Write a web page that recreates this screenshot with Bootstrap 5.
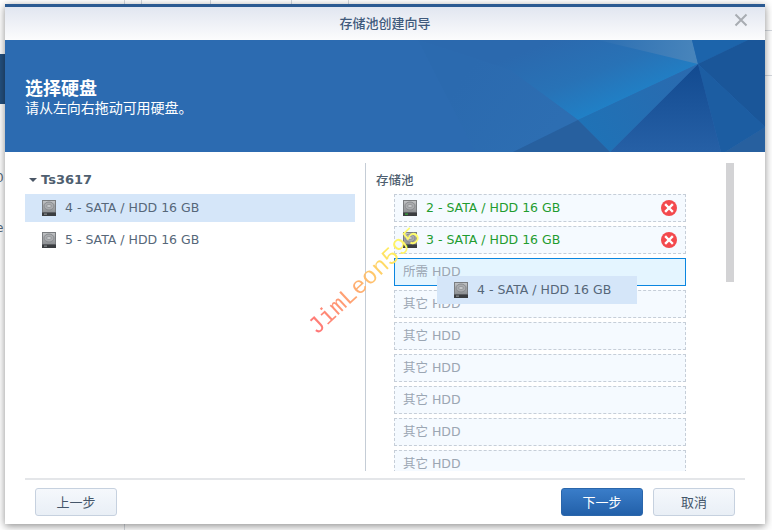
<!DOCTYPE html>
<html lang="zh">
<head>
<meta charset="utf-8">
<title>存储池创建向导</title>
<link href="https://cdn.jsdelivr.net/npm/bootstrap@5.3.0/dist/css/bootstrap.min.css" rel="stylesheet">
<style>
html,body{height:530px;overflow:hidden;background:#fff}
body{font-family:"DejaVu Sans","Noto Sans CJK SC",sans-serif;font-size:12.5px;color:#566779}
.desk{position:relative;width:772px;height:530px;overflow:hidden}
.vline{position:absolute;width:1px;background:#d4d8de}
.vl-t{top:0;height:5px}
.vl-b{top:524px;height:6px;left:124px}
.hline{position:absolute;left:765px;right:0;height:1px;background:#d4d8de}
.side-block{position:absolute;left:0;top:54px;width:5px;height:50px;background:#24507f}
.side-txt{position:absolute;left:-4px;font-size:12px;line-height:14px;color:#566779}
.wiz{position:absolute;left:5px;top:4px;width:760px;height:520px;background:#fff;border-top:3px solid #2b5a92;box-shadow:0 2px 8px rgba(0,0,0,.45)}
.wiz-title{height:33px;flex:none;background:linear-gradient(#e1e6f0,#fcfcfd);font:13px/32px "Noto Sans CJK SC",sans-serif;font-weight:500;color:#3f5a7c;text-align:center}
.wiz-x{position:absolute;right:17px;top:6px;width:14px;height:14px}
.hero{position:relative;height:112px;flex:none;background:#2c6bb1;color:#fff;padding:36px 0 0 20px;overflow:hidden;font-family:"Noto Sans CJK SC",sans-serif}
.hero svg{position:absolute;left:0;top:0}
.hero-h{position:relative;font-size:18px;line-height:22px;font-weight:700}
.hero-s{position:relative;font-size:14px;line-height:18px;letter-spacing:-.05px}
.wiz-main{height:308px;flex:none;margin-top:11px;padding-left:20px}
.left-pane{width:341px;height:308px;flex:none;border-right:1px solid #c5cdd6;padding-right:10px}
.tree-head{height:31px;font-weight:700;font-size:13px;line-height:33px;color:#4f5f70;padding-left:4px}
.tree-arrow{display:inline-block;width:0;height:0;border-left:4px solid transparent;border-right:4px solid transparent;border-top:4px solid #4a5666;margin-right:4px;vertical-align:2px}
.disk-row{height:28px;margin-bottom:4px;padding-left:17px;gap:9px;line-height:28px;white-space:nowrap}
.disk-sel{background:#d5e6f9}
.right-pane{width:368px;height:308px;flex:none;overflow:hidden}
.pool-label{height:31px;padding-left:10px;font:500 12.5px/33px "Noto Sans CJK SC",sans-serif;color:#4f5f70}
.slots{margin-left:28px;width:292px}
.slot{height:28px;margin-bottom:4px;border:1px dashed #c6ced8;background:#f5faff;padding-left:8px;gap:9px;line-height:26px;white-space:nowrap;color:#9ba6b3;font-family:"DejaVu Sans","Noto Sans CJK SC",sans-serif}
.slot-done{color:#1f9c2f}
.slot-focus{border:1px solid #0a86e0;background:#e4f5ff}
.rm{margin-left:auto;margin-right:8px}
.sbar{width:8px;height:119px;flex:none;background:#d3d3d5}
.wiz-foot{margin:7px 20px 0;flex:none;border-top:2px solid #e4e6e9;padding:8px 10px 0;gap:10px}
.wbtn{width:82px;height:28px;padding:0;border-radius:3px;font:13px/26px "Noto Sans CJK SC",sans-serif;color:#45566a;border:1px solid #c6d1df;background:linear-gradient(#f5f8fc,#e9eff6)}
.wbtn-main{color:#fff;border-color:#2a66ab;background:linear-gradient(#3a7dc9,#2260a9)}
.ghost{position:absolute;left:437px;top:276px;width:200px;height:28px;background:#d5e6f9;padding-left:17px;gap:9px;line-height:28px;white-space:nowrap}
.wmark{position:absolute;left:293px;top:268px;width:144px;font:24px/28px "Liberation Mono",monospace;transform:rotate(-43deg);background:linear-gradient(90deg,#ff7478,#ffb070 45%,#fff060 80%,#ffff70);-webkit-background-clip:text;background-clip:text;color:transparent;white-space:nowrap}
</style>
</head>
<body>
<svg width="0" height="0" class="position-absolute">
<defs>
<linearGradient id="hb" x1="0" y1="0" x2="0" y2="1"><stop offset="0" stop-color="#c4c6c8"/><stop offset="1" stop-color="#8b8e91"/></linearGradient>
<symbol id="hdd" viewBox="0 0 14 16">
<rect x="0" y="0" width="14" height="12.5" fill="url(#hb)"/>
<rect x=".5" y=".5" width="13" height="12" fill="none" stroke="#7a7d80"/>
<ellipse cx="7" cy="6" rx="5" ry="4" fill="#a9abae" stroke="#808386" stroke-width=".8"/>
<ellipse cx="7" cy="6" rx="2.4" ry="1.5" fill="#c9cbcd" stroke="#808386" stroke-width=".6"/>
<rect x="0" y="12.5" width="14" height="3.5" fill="#3a3d40"/>
<rect x="2" y="13.6" width="3" height="1" fill="#9a9da0"/>
</symbol>
<symbol id="hddg" viewBox="0 0 14 16">
<rect x="0" y="0" width="14" height="12.5" fill="url(#hb)"/>
<rect x=".5" y=".5" width="13" height="12" fill="none" stroke="#7a7d80"/>
<ellipse cx="7" cy="6" rx="5" ry="4" fill="#a9abae" stroke="#808386" stroke-width=".8"/>
<ellipse cx="7" cy="6" rx="2.4" ry="1.5" fill="#c9cbcd" stroke="#808386" stroke-width=".6"/>
<rect x="0" y="12.5" width="14" height="3.5" fill="#3a3d40"/>
<rect x="2" y="13.6" width="3" height="1" fill="#35c23a"/>
</symbol>
<symbol id="rmx" viewBox="0 0 16 16">
<circle cx="8" cy="8" r="8" fill="#f3494d"/>
<path d="M5 5l6 6M11 5l-6 6" stroke="#fff" stroke-width="2.4" stroke-linecap="square"/>
</symbol>
</defs>
</svg>
<div class="desk">
  <div class="vline vl-t" style="left:124px"></div>
  <div class="vline vl-t" style="left:141px"></div>
  <div class="vline vl-t" style="left:210px"></div>
  <div class="vline vl-t" style="left:291px"></div>
  <div class="vline vl-t" style="left:348px"></div>
  <div class="vline vl-b"></div>
  <div class="hline" style="top:30px"></div>
  <div class="hline" style="top:75px"></div>
  <div class="side-block"></div>
  <div class="side-txt" style="top:171px">0</div>
  <div class="side-txt" style="top:221px">e</div>

  <div class="wiz d-flex flex-column">
    <div class="wiz-title position-relative">存储池创建向导
      <svg class="wiz-x" viewBox="0 0 14 14"><path d="M1.5 1.5l11 11M12.5 1.5l-11 11" stroke="#a8acb2" stroke-width="2"/></svg>
    </div>
    <div class="hero">
      <svg width="760" height="112" viewBox="5 40 760 112">
        <defs>
          <linearGradient id="g1" gradientUnits="userSpaceOnUse" x1="540" y1="45" x2="570" y2="122"><stop offset="0" stop-color="#2b69ae"/><stop offset=".55" stop-color="#2872b6"/><stop offset="1" stop-color="#2080c6"/></linearGradient>
          <linearGradient id="g2" x1="0" y1="0" x2="0" y2="1"><stop offset="0" stop-color="#124a90"/><stop offset="1" stop-color="#2660a6"/></linearGradient>
          <linearGradient id="g3" gradientUnits="userSpaceOnUse" x1="690" y1="70" x2="590" y2="135"><stop offset="0" stop-color="#2a6aaf"/><stop offset="1" stop-color="#1f72b6"/></linearGradient>
          <linearGradient id="g4" gradientUnits="userSpaceOnUse" x1="600" y1="40" x2="692" y2="55"><stop offset="0" stop-color="#2d6fb2"/><stop offset="1" stop-color="#4784bb"/></linearGradient>
          <linearGradient id="g5" gradientUnits="userSpaceOnUse" x1="475" y1="60" x2="560" y2="120"><stop offset="0" stop-color="#2b6aaf"/><stop offset="1" stop-color="#2d6eb2"/></linearGradient>
        </defs>
        <polygon points="418,40 692,40 698,64 578,120 510,70" fill="url(#g1)"/>
        <polygon points="418,40 510,70 578,120 513,152 475,152" fill="url(#g5)"/>
        <polygon points="598,40 692,40 698,64" fill="url(#g4)"/>
        <polygon points="692,40 748,40 698,64" fill="#1c64ab"/>
        <polygon points="748,40 765,40 765,127 698,64" fill="#1a5699"/>
        <polygon points="698,64 765,127 725,152 721,152" fill="#1c5da2"/>
        <polygon points="765,127 765,152 725,152" fill="#27609f"/>
        <polygon points="698,64 721,152 610,152" fill="url(#g2)"/>
        <polygon points="698,64 610,152 578,120" fill="url(#g3)"/>
        <polygon points="578,120 610,152 513,152" fill="#27609f"/>
      </svg>
      <div class="hero-h">选择硬盘</div>
      <div class="hero-s">请从左向右拖动可用硬盘。</div>
    </div>
    <div class="wiz-main d-flex">
      <div class="left-pane">
        <div class="tree-head"><span class="tree-arrow"></span>Ts3617</div>
        <div class="disk-row disk-sel d-flex align-items-center"><svg width="14" height="16"><use href="#hdd"/></svg><span>4 - SATA / HDD 16 GB</span></div>
        <div class="disk-row d-flex align-items-center"><svg width="14" height="16"><use href="#hdd"/></svg><span>5 - SATA / HDD 16 GB</span></div>
      </div>
      <div class="right-pane d-flex">
        <div class="flex-grow-1">
          <div class="pool-label">存储池</div>
          <div class="slots">
            <div class="slot slot-done d-flex align-items-center"><svg width="14" height="16"><use href="#hddg"/></svg><span>2 - SATA / HDD 16 GB</span><svg class="rm" width="16" height="16"><use href="#rmx"/></svg></div>
            <div class="slot slot-done d-flex align-items-center"><svg width="14" height="16"><use href="#hddg"/></svg><span>3 - SATA / HDD 16 GB</span><svg class="rm" width="16" height="16"><use href="#rmx"/></svg></div>
            <div class="slot slot-focus">所需 HDD</div>
            <div class="slot">其它 HDD</div>
            <div class="slot">其它 HDD</div>
            <div class="slot">其它 HDD</div>
            <div class="slot">其它 HDD</div>
            <div class="slot">其它 HDD</div>
            <div class="slot">其它 HDD</div>
          </div>
        </div>
        <div class="sbar"></div>
      </div>
    </div>
    <div class="wiz-foot d-flex">
      <button type="button" class="btn wbtn">上一步</button>
      <button type="button" class="btn wbtn wbtn-main ms-auto">下一步</button>
      <button type="button" class="btn wbtn">取消</button>
    </div>
  </div>

  <div class="wmark">JimLeon595</div>
  <div class="ghost d-flex align-items-center"><svg width="14" height="16"><use href="#hdd"/></svg><span>4 - SATA / HDD 16 GB</span></div>
</div>
<script src="https://cdn.jsdelivr.net/npm/bootstrap@5.3.0/dist/js/bootstrap.bundle.min.js"></script>
</body>
</html>
